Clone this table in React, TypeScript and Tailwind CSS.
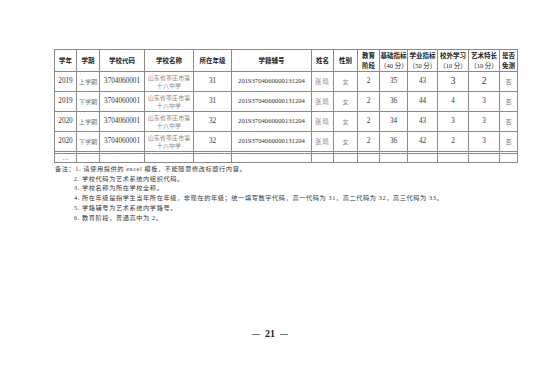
import React from "react";

const serif = { fontFamily: '"Liberation Serif", "Noto Sans CJK SC", serif' };

const widths = [22, 23, 45, 49, 38, 80, 22, 24, 22, 28, 30, 31, 31, 18];

type Row = {
  year: string;
  term: string;
  grade: string;
  a: string;
  b: string;
  c: string;
  d: string;
  big?: boolean;
};

const rows: Row[] = [
  { year: "2019", term: "上学期", grade: "31", a: "35", b: "43", c: "3", d: "2", big: true },
  { year: "2019", term: "下学期", grade: "31", a: "36", b: "44", c: "4", d: "3" },
  { year: "2020", term: "上学期", grade: "32", a: "34", b: "43", c: "3", d: "3" },
  { year: "2020", term: "下学期", grade: "32", a: "36", b: "42", c: "2", d: "3" },
];

const td = "border border-[#8a8a8a] p-0 text-center align-middle whitespace-nowrap";

export default function App() {
  return (
    <div className="w-[540px] h-[381px] bg-white flex flex-col" style={serif}>
      <div className="pl-[54px] pt-[49px]">
        <table className="border-collapse table-fixed w-[463px]">
          <colgroup>
            {widths.map((w, i) => (
              <col key={i} style={{ width: w }} />
            ))}
          </colgroup>
          <thead>
            <tr className="h-[22px] text-[6.5px] font-bold text-[#222] leading-[10px]">
              <th className={td}>学年</th>
              <th className={td}>学期</th>
              <th className={td}>学校代码</th>
              <th className={td}>学校名称</th>
              <th className={td}>所在年级</th>
              <th className={td}>学籍辅号</th>
              <th className={td}>姓名</th>
              <th className={td}>性别</th>
              <th className={td}>
                教育
                <br />
                阶段
              </th>
              <th className={td}>
                基础指标
                <br />
                <span className="font-normal">（40 分）</span>
              </th>
              <th className={td}>
                学业指标
                <br />
                <span className="font-normal">（50 分）</span>
              </th>
              <th className={td}>
                校外学习
                <br />
                <span className="font-normal">（10 分）</span>
              </th>
              <th className={td}>
                艺术特长
                <br />
                <span className="font-normal">（10 分）</span>
              </th>
              <th className={td}>
                是否
                <br />
                免测
              </th>
            </tr>
          </thead>
          <tbody>
            {rows.map((r, i) => (
              <tr key={i} className="h-[20px] text-[7.2px] text-[#333]">
                <td className={td}>{r.year}</td>
                <td className={`${td} text-[#777] text-[6.2px]`}>{r.term}</td>
                <td className={td}>3704060001</td>
                <td className={`${td} text-[#888] text-[6px] leading-[8px] tracking-[0.1px]`}>
                  山东省枣庄市第
                  <br />
                  十八中学
                </td>
                <td className={td}>{r.grade}</td>
                <td className={`${td} text-[6.7px]`}>20193704060000131204</td>
                <td className={`${td} text-[#888] text-[6.4px] tracking-[1px]`}>张晴</td>
                <td className={`${td} text-[#888] text-[6.2px]`}>女</td>
                <td className={td}>2</td>
                <td className={td}>{r.a}</td>
                <td className={td}>{r.b}</td>
                <td className={`${td} ${r.big ? "text-[9.5px]" : ""}`}>{r.c}</td>
                <td className={`${td} ${r.big ? "text-[9.5px]" : ""}`}>{r.d}</td>
                <td className={`${td} text-[#777] text-[6.2px]`}>否</td>
              </tr>
            ))}
            <tr className="h-[2px]">
              {widths.map((_, i) => (
                <td key={i} className={td}></td>
              ))}
            </tr>
            <tr className="h-[9px] text-[6px] text-[#555] leading-[6px]">
              <td className={td}>…</td>
              {widths.slice(1).map((_, i) => (
                <td key={i} className={td}></td>
              ))}
            </tr>
          </tbody>
        </table>
      </div>
      <div className="pl-[55px] pt-[1px] text-[6.2px] leading-[9.7px] text-[#333] tracking-[0.6px]">
        <div>备注：1. 请使用提供的 excel 模板，不能随意修改标题行内容。</div>
        <div className="pl-[19px]">2. 学校代码为艺术系统内组织代码。</div>
        <div className="pl-[19px]">3. 学校名称为所在学校全称。</div>
        <div className="pl-[19px]">
          4. 所在年级是指学生当年所在年级，非现在的年级；统一填写数字代码，高一代码为 31，高二代码为 32，高三代码为 33。
        </div>
        <div className="pl-[19px]">5. 学籍辅号为艺术系统内学籍号。</div>
        <div className="pl-[19px]">6. 教育阶段，普通高中为 2。</div>
      </div>
      <div className="mt-[107px] flex justify-center items-center gap-[5px]">
        <span className="block w-[8px] h-[1px] bg-[#777]"></span>
        <span className="text-[10px] font-bold text-[#222] leading-[10px]">21</span>
        <span className="block w-[8px] h-[1px] bg-[#777]"></span>
      </div>
    </div>
  );
}
